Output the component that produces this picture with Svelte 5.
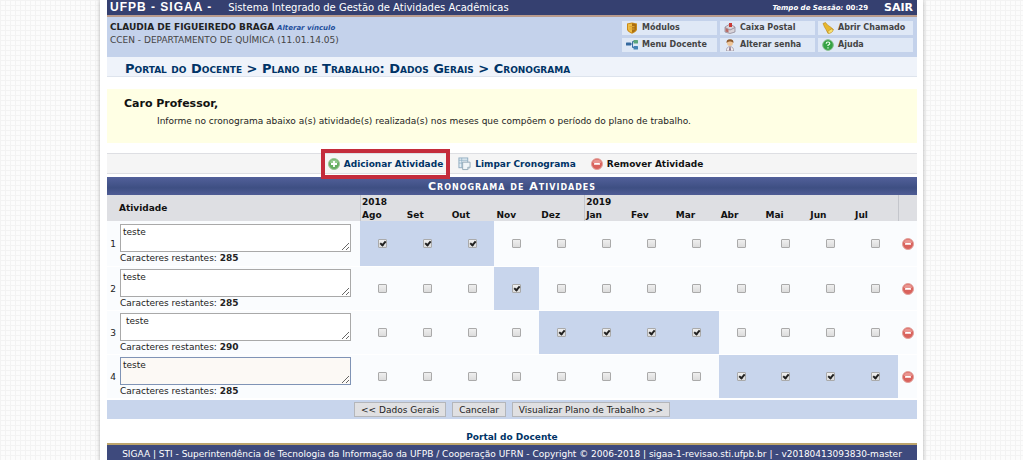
<script>
  const menu = [
    { icon: 'shield', label: 'Módulos' },
    { icon: 'mail', label: 'Caixa Postal' },
    { icon: 'bell', label: 'Abrir Chamado' },
    { icon: 'tree', label: 'Menu Docente' },
    { icon: 'user', label: 'Alterar senha' },
    { icon: 'help', label: 'Ajuda' },
  ];

  const months = ['Ago', 'Set', 'Out', 'Nov', 'Dez', 'Jan', 'Fev', 'Mar', 'Abr', 'Mai', 'Jun', 'Jul'];

  function monthRange(from, to) {
    return months.map((_, i) => i >= from && i <= to);
  }

  let activities = $state([
    { text: 'teste', left: 285, marks: monthRange(0, 2) },
    { text: 'teste', left: 285, marks: monthRange(3, 3) },
    { text: ' teste', left: 290, marks: monthRange(4, 7) },
    { text: 'teste', left: 285, marks: monthRange(8, 11) },
  ]);

  function removeActivity(index) {
    activities.splice(index, 1);
  }

  function addActivity() {
    activities.push({ text: '', left: 290, marks: monthRange(-1, -1) });
  }

  function clearSchedule() {
    for (const activity of activities) activity.marks = monthRange(-1, -1);
  }
</script>

{#snippet minus()}
  <svg class="round" viewBox="0 0 12 12" aria-hidden="true">
    <circle cx="6" cy="6" r="5.5" fill="#d9625c" stroke="#e2a29c" />
    <path d="M2 5a4 3.5 0 0 1 8 0z" fill="#e99590" />
    <rect x="3" y="5" width="6" height="1.8" rx="0.4" fill="#fff" />
  </svg>
{/snippet}

{#snippet menuIcon(name)}
  <svg class="menu-icon" viewBox="0 0 12 12" aria-hidden="true">
    {#if name === 'shield'}
      <path d="M1 1.5 6 .5l5 1v6Q10.5 10 6 11.7 1.5 10 1 7.5z" fill="#c98a18" />
      <path d="M2 2.3 6 1.5v9Q2.5 9.5 2 7z" fill="#efbd45" />
      <path d="M6 1.5 10 2.3V7Q9.5 9.5 6 10.5z" fill="#a96e12" />
      <path d="M3.5 4h5v1.2h-5zM3.5 6.5h5v1h-5z" fill="#dda432" />
    {:else if name === 'mail'}
      <path d="M1 5 6 2l5 3v5l-5 1.5-5-1.5z" fill="#d9d4da" stroke="#87808e" stroke-width=".7" />
      <path d="M1 5.5 6 8l5-2.5" fill="none" stroke="#8b8593" stroke-width=".8" />
      <path d="M5 1h3v4H5z" fill="#c93b36" />
      <path d="m1.5 6 3 1.5v3l-3-1z" fill="#b86b66" />
    {:else if name === 'bell'}
      <path d="M1 1.5 3.5.5 5.5 3l3 2 3 2.5L6 11.5 4 7.5 2.5 5z" fill="#e8b82e" stroke="#b78519" stroke-width=".6" />
      <ellipse cx="8.5" cy="9.2" rx="3" ry="1.6" transform="rotate(-35 8.5 9.2)" fill="#f6df73" stroke="#b78519" stroke-width=".5" />
    {:else if name === 'tree'}
      <path d="M4 5h2.5m0-2.5v6M6.5 2.5H8m-1.5 6H8" fill="none" stroke="#3a6fa2" />
      <rect x="0" y="3.5" width="5" height="3" rx=".6" fill="#35699f" />
      <rect x="7.5" y="1" width="4.5" height="3.5" rx=".6" fill="#5ba57b" />
      <rect x="7.5" y="7" width="4.5" height="3.5" rx=".6" fill="#4382b4" />
    {:else if name === 'user'}
      <path d="M2.5 12Q2 8 6 7.5 10 8 9.5 12z" fill="#f1ecec" stroke="#8b8292" stroke-width=".6" />
      <circle cx="6" cy="3.9" r="3" fill="#efc69a" />
      <path d="M2.6 4Q2 .5 6 .3 10 .5 9.4 4 8 2 6 2.5 4 2 2.6 4z" fill="#8d5a2d" />
      <path d="m5.5 8 1 0 .3 3.5h-1.6z" fill="#6b5377" />
    {:else}
      <circle cx="6" cy="6" r="5.3" fill="#35a345" stroke="#7fbb83" />
      <path d="M4.2 4.7Q4.2 3 6 3t1.8 1.5Q7.8 5.5 6 6.3v.8M6 8.2v1.2" fill="none" stroke="#eaffea" stroke-width="1.2" />
    {/if}
  </svg>
{/snippet}

<div class="page">
  <div class="sheet">
    <header class="topbar">
      <h1>UFPB - SIGAA -</h1>
      <span class="system">Sistema Integrado de Gestão de Atividades Acadêmicas</span>
      <span class="session"><em>Tempo de Sessão:</em> 00:29</span>
      <a class="logout" href="#sair">SAIR</a>
    </header>

    <div class="user-panel">
      <div class="user">
        <div><strong>CLAUDIA DE FIGUEIREDO BRAGA</strong> <a href="#vinculo">Alterar vínculo</a></div>
        <div class="unit">CCEN - DEPARTAMENTO DE QUÍMICA (11.01.14.05)</div>
      </div>
      <nav class="menu">
        {#each menu as item}
          <a href="#{item.icon}">{@render menuIcon(item.icon)}{item.label}</a>
        {/each}
      </nav>
    </div>

    <h2 class="breadcrumb">Portal do Docente &gt; Plano de Trabalho: Dados Gerais &gt; Cronograma</h2>

    <section class="notice">
      <h3>Caro Professor,</h3>
      <p>Informe no cronograma abaixo a(s) atividade(s) realizada(s) nos meses que compõem o período do plano de trabalho.</p>
    </section>

    <div class="legend">
      <button class="action highlighted" type="button" onclick={addActivity}>
        <svg class="round" viewBox="0 0 12 12" aria-hidden="true">
          <circle cx="6" cy="6" r="5.5" fill="#65ad60" stroke="#9bc596" />
          <path d="M2 5a4 3.5 0 0 1 8 0z" fill="#92c98d" />
          <path d="M6 3v6M3 6h6" stroke="#fff" stroke-width="1.8" />
        </svg>
        Adicionar Atividade
      </button>
      <button class="action" type="button" onclick={clearSchedule}>
        <svg class="sheet-icon" viewBox="0 0 14 14" aria-hidden="true">
          <rect x="1" y=".5" width="9.5" height="10.5" fill="#e4edf4" stroke="#8fabc0" />
          <path d="M1 3h9.5M4 .5V11M1 6h9.5" stroke="#8fb0c4" fill="none" stroke-width=".8" />
          <path d="M5 5h8v5.5L10.5 13H5z" fill="#f0f5f8" stroke="#91a7b5" />
          <path d="M10.5 13v-2.5H13" fill="#c7d3dc" stroke="#91a7b5" stroke-width=".8" />
        </svg>
        Limpar Cronograma
      </button>
      <span class="action plain">{@render minus()} Remover Atividade</span>
    </div>

    <form onsubmit={(e) => e.preventDefault()}>
      <table>
        <caption>Cronograma de Atividades</caption>
        <colgroup>
          <col class="col-number" />
          <col class="col-activity" />
          {#each months as _}
            <col />
          {/each}
          <col class="col-remove" />
        </colgroup>
        <thead>
          <tr>
            <th class="activity-head" colspan="2" rowspan="2">Atividade</th>
            <th class="split" colspan="5">2018</th>
            <th class="split" colspan="7">2019</th>
            <th class="split" rowspan="2"></th>
          </tr>
          <tr>
            {#each months as month, i}
              <th class:split={i === 0 || i === 5}>{month}</th>
            {/each}
          </tr>
        </thead>
        <tbody>
          {#each activities as activity, row}
            <tr>
              <td class="number">{row + 1}</td>
              <td class="activity">
                <textarea
                  class:current={row === 3}
                  aria-label="Atividade {row + 1}"
                  spellcheck="false"
                  bind:value={activity.text}
                ></textarea>
                <div>Caracteres restantes: <strong>{activity.left}</strong></div>
              </td>
              {#each months as month, i}
                <td class="month" class:marked={activity.marks[i]}>
                  <input type="checkbox" aria-label="{month}, atividade {row + 1}" bind:checked={activity.marks[i]} />
                </td>
              {/each}
              <td class="remove">
                <button type="button" aria-label="Remover atividade {row + 1}" onclick={() => removeActivity(row)}>
                  {@render minus()}
                </button>
              </td>
            </tr>
          {/each}
        </tbody>
      </table>
      <div class="buttons">
        <button type="button">&lt;&lt; Dados Gerais</button>
        <button type="button">Cancelar</button>
        <button type="submit">Visualizar Plano de Trabalho &gt;&gt;</button>
      </div>
    </form>

    <a class="portal" href="#portal">Portal do Docente</a>

    <footer>
      SIGAA | STI - Superintendência de Tecnologia da Informação da UFPB / Cooperação UFRN - Copyright © 2006-2018 | sigaa-1-revisao.sti.ufpb.br | - v20180413093830-master
    </footer>
  </div>
</div>

<style>
  :global(body) {
    margin: 0;
    background-color: #fcfcfc;
    background-image:
      linear-gradient(#f3f3f3 1px, transparent 1px),
      linear-gradient(90deg, #f3f3f3 1px, transparent 1px);
    background-size: 5px 5px;
  }

  .page {
    padding: 0 100px;
    font-family: 'DejaVu Sans', Verdana, sans-serif;
    font-size: 9px;
    line-height: 12px;
    color: #222;
  }

  .sheet {
    padding: 0 6px 0 7px;
    background: #fff;
    box-shadow: 0 0 4px #aaa;
  }

  a {
    color: #003366;
    text-decoration: none;
  }

  h1,
  h2,
  h3,
  p {
    margin: 0;
  }

  button {
    font: inherit;
    cursor: pointer;
  }

  /* Header */
  .topbar {
    display: flex;
    align-items: center;
    height: 15px;
    padding: 0 4px 0 3px;
    background: #354070;
    border-bottom: 2px solid #b99b8c;
    color: #fff;
    white-space: nowrap;
  }

  .topbar h1 {
    font: bold 12px/15px 'Liberation Sans', Arial, sans-serif;
    letter-spacing: 1px;
  }

  .system {
    margin-left: 16px;
    font-size: 10px;
  }

  .session {
    margin-left: auto;
    font-size: 7px;
    font-weight: bold;
  }

  .logout {
    margin-left: 16px;
    font-size: 11px;
    font-weight: bold;
    color: #fff;
  }

  .user-panel {
    display: flex;
    justify-content: space-between;
    height: 40px;
    padding: 0 4px 0 3px;
    background: #c4d2eb;
  }

  .user {
    padding-top: 4px;
  }

  .user a {
    color: #1f4f9c;
    font-size: 7px;
    font-weight: bold;
    font-style: italic;
  }

  .unit {
    color: #444;
  }

  .menu {
    display: grid;
    grid-template-columns: repeat(3, 95px);
    grid-template-rows: 14px 14px;
    gap: 3px;
    padding-top: 4px;
  }

  .menu a {
    display: flex;
    align-items: center;
    gap: 4px;
    padding-left: 4px;
    background: #dfe8f6;
    color: #444;
    font-size: 8px;
    font-weight: bold;
    white-space: nowrap;
  }

  .menu-icon {
    width: 12px;
    height: 12px;
  }

  .breadcrumb {
    height: 19px;
    padding-left: 18px;
    background: #eff3fa;
    border-bottom: 1px solid #dee4ed;
    color: #003366;
    font-size: 13px;
    line-height: 23px;
    font-variant: small-caps;
  }

  .notice {
    margin-top: 12px;
    height: 46px;
    padding: 8px 17px 0;
    background: #ffffe4;
  }

  .notice h3 {
    color: #111;
    font-size: 11px;
    line-height: 14px;
  }

  .notice p {
    padding: 4px 0 0 33px;
  }

  .legend {
    display: flex;
    align-items: center;
    justify-content: center;
    height: 19px;
    margin: 10px 0 3px;
    background: #f5f5f5;
    border: solid #dedfe3;
    border-width: 1px 0;
  }

  .action {
    display: flex;
    align-items: center;
    gap: 4px;
    padding: 0;
    margin-right: 15px;
    background: none;
    border: 0;
    color: #003366;
    font-weight: bold;
    white-space: nowrap;
  }

  .highlighted {
    margin: 0 8px 0 0;
    padding: 5px 3px;
    border: 4px solid #c42c3c;
    position: relative;
  }

  .plain {
    margin-right: 0;
    color: #111;
  }

  .round {
    display: block;
    width: 12px;
    height: 12px;
  }

  .sheet-icon {
    width: 13px;
    height: 14px;
  }

  /* Schedule */
  table {
    width: 100%;
    table-layout: fixed;
    border-collapse: separate;
    border-spacing: 0;
    background: #fafcfe;
  }

  caption {
    height: 18px;
    background: linear-gradient(#52609a, #3e4f83 60%, #4f5c95);
    color: #fff;
    font-size: 11px;
    line-height: 20px;
    font-weight: bold;
    font-variant: small-caps;
    letter-spacing: 1px;
  }

  .col-number {
    width: 12px;
  }

  .col-activity {
    width: 241px;
  }

  .col-remove {
    width: 19px;
  }

  th,
  td {
    padding: 0;
  }

  th {
    height: 13px;
    background: #dedfe3;
    color: #111;
    text-align: left;
    padding-left: 2px;
  }

  .split {
    padding-left: 1px;
    border-left: 1px solid #c4c6cc;
  }

  th.activity-head {
    padding-left: 12px;
  }

  td {
    height: 43px;
    border-bottom: 1px solid #fff;
  }

  tbody tr:first-child td {
    height: 45px;
  }

  .number {
    text-align: center;
  }

  .activity {
    padding-left: 1px;
  }

  textarea {
    display: block;
    box-sizing: border-box;
    width: 231px;
    height: 28px;
    padding: 1px 2px;
    background: #fff;
    border: 1px solid #a9a9a9;
    color: #222;
    font: inherit;
  }

  .current {
    background: #fcf9f5;
    border-color: #7f93b5;
  }

  .month {
    text-align: center;
  }

  .marked {
    background: #c8d5ec;
  }

  input {
    appearance: none;
    display: block;
    position: relative;
    box-sizing: border-box;
    width: 9px;
    height: 9px;
    margin: 0 auto;
    background: linear-gradient(#efefef, #dcdcdc);
    border: 1px solid #aaa;
    border-radius: 1px;
  }

  input:checked::after {
    content: '';
    position: absolute;
    left: 2px;
    top: 0;
    width: 2px;
    height: 4px;
    border: solid #222;
    border-width: 0 2px 2px 0;
    transform: rotate(40deg);
  }

  .remove button {
    display: block;
    margin: 0 auto;
    padding: 0;
    background: none;
    border: 0;
  }

  .buttons {
    display: flex;
    justify-content: center;
    gap: 6px;
    padding: 2px 0;
    margin-top: 1px;
    background: #c8d5ec;
  }

  .buttons button {
    height: 15px;
    padding: 0 6px;
    background: #e0e0e2;
    border: 1px solid #b4b6ba;
    color: #222;
    line-height: 12px;
  }

  .portal {
    display: block;
    padding: 12px 0 0;
    font-weight: bold;
    text-align: center;
  }

  footer {
    padding: 3px 0;
    background: #3e4a7d;
    border-top: 2px solid #bda56c;
    color: #fff;
    font-size: 9px;
    text-align: center;
    white-space: nowrap;
  }
</style>
